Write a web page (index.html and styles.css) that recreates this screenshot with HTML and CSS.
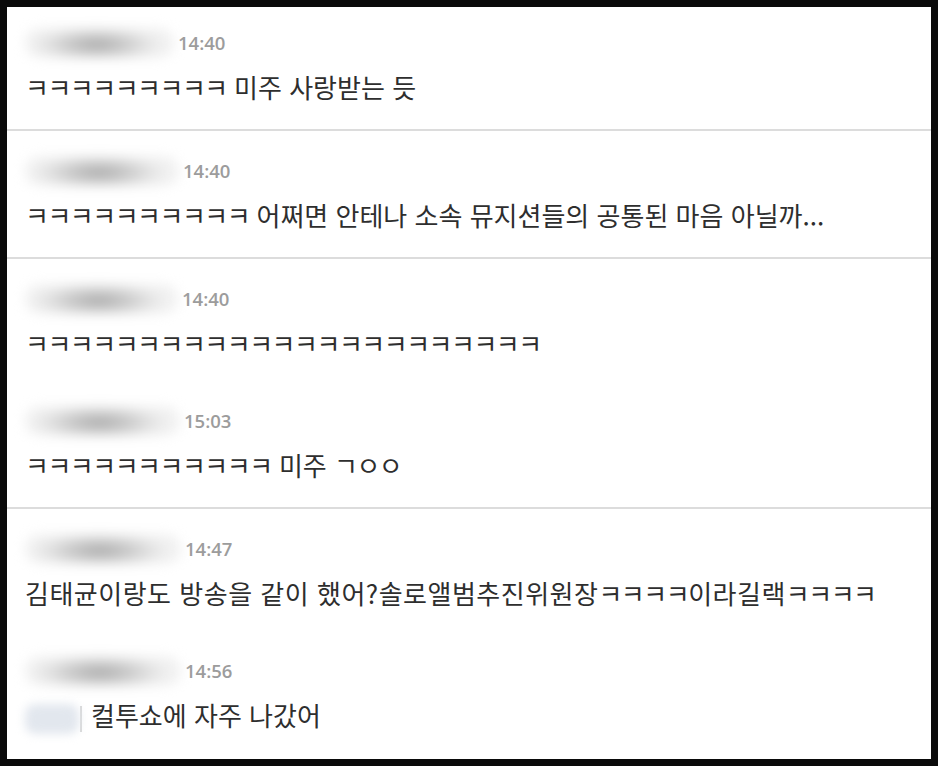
FILE: index.html
```html
<!DOCTYPE html>
<html lang="ko">
<head>
<meta charset="utf-8">
<title>댓글</title>
<link rel="stylesheet" href="styles.css">
</head>
<body>
<div class="panel">
  <div class="group">
    <div class="comment">
      <div class="meta"><span class="nick w1"></span><span class="time">14:40</span></div>
      <div class="text"><span class="kk">ㅋㅋㅋㅋㅋㅋㅋㅋㅋ</span> 미주 사랑받는 듯</div>
    </div>
  </div>
  <div class="group">
    <div class="comment">
      <div class="meta"><span class="nick w2"></span><span class="time">14:40</span></div>
      <div class="text"><span class="kk">ㅋㅋㅋㅋㅋㅋㅋㅋㅋㅋ</span> 어쩌면 안테나 소속 뮤지션들의 공통된 마음 아닐까...</div>
    </div>
  </div>
  <div class="group">
    <div class="comment">
      <div class="meta"><span class="nick w3"></span><span class="time">14:40</span></div>
      <div class="text"><span class="kk">ㅋㅋㅋㅋㅋㅋㅋㅋㅋㅋㅋㅋㅋㅋㅋㅋㅋㅋㅋㅋㅋㅋㅋ</span></div>
    </div>
    <div class="comment">
      <div class="meta"><span class="nick w4"></span><span class="time">15:03</span></div>
      <div class="text"><span class="kk">ㅋㅋㅋㅋㅋㅋㅋㅋㅋㅋㅋ</span> 미주 <span class="kk">ㄱㅇㅇ</span></div>
    </div>
  </div>
  <div class="group">
    <div class="comment">
      <div class="meta"><span class="nick w5"></span><span class="time">14:47</span></div>
      <div class="text wide">김태균이랑도 방송을 같이 했어?솔로앨범추진위원장<span class="kk">ㅋㅋㅋㅋ</span>이라길랙<span class="kk">ㅋㅋㅋㅋ</span></div>
    </div>
    <div class="comment">
      <div class="meta"><span class="nick w5"></span><span class="time">14:56</span></div>
      <div class="text"><span class="mention"></span><span class="caret"></span>컬투쇼에 자주 나갔어</div>
    </div>
  </div>
</div>
</body>
</html>
```

FILE: styles.css
```css
html, body {
  margin: 0;
  padding: 0;
  background: #0a0a0a;
}
body {
  width: 938px;
  height: 766px;
  overflow: hidden;
}
.panel {
  margin: 7px;
  width: 924px;
  height: 752px;
  background: #ffffff;
  overflow: hidden;
}
.group {
  border-bottom: 2px solid #dcdcdc;
}
.group:last-child {
  border-bottom: none;
}
.comment {
  padding: 28px 18px 26px 18px;
}
.comment + .comment {
  padding-top: 24px;
}
.group:first-child .comment {
  padding-top: 24px;
}
.meta {
  height: 24px;
  display: flex;
  align-items: center;
  margin-bottom: 16px;
}
.nick {
  display: inline-block;
  height: 30px;
  border-radius: 15px;
  background: radial-gradient(ellipse 45% 60% at 48% 55%, #a9a9a9 0%, #c6c6c6 40%, #e2e2e2 75%, #f1f1f1 100%);
  filter: blur(6px);
  margin-right: 4px;
}
.w1 { width: 149px; }
.w2 { width: 154px; }
.w3 { width: 153px; }
.w4 { width: 155px; }
.w5 { width: 156px; }
.time {
  font-family: "Open Sans", "Liberation Sans", sans-serif;
  font-weight: 600;
  font-size: 18.5px;
  color: #9c9c9c;
  line-height: 24px;
}
.text {
  font-family: "Noto Sans CJK KR", "Noto Sans", sans-serif;
  font-size: 26px;
  line-height: 32px;
  height: 32px;
  color: #2e2e2e;
  white-space: pre;
}
.wide {
  letter-spacing: 0.5px;
}
.kk {
  letter-spacing: -1.5px;
}
.mention {
  display: inline-block;
  vertical-align: middle;
  width: 54px;
  height: 30px;
  border-radius: 10px;
  background: #e2e7ee;
  filter: blur(5px);
}
.caret {
  display: inline-block;
  vertical-align: middle;
  width: 2px;
  height: 26px;
  background: #d8d8d8;
  margin: 0 9px 0 1px;
}
```
